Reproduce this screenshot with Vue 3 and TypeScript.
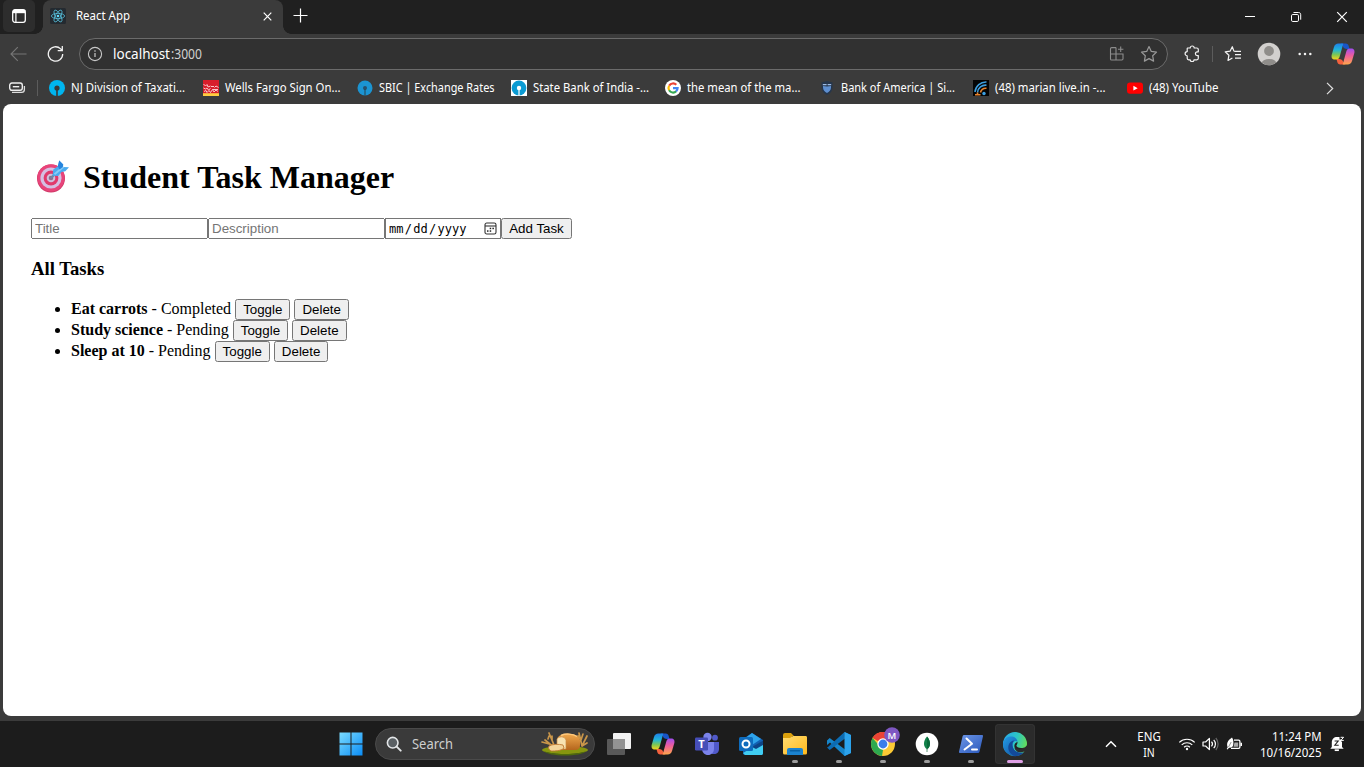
<script setup lang="ts">
import { ref } from 'vue'

interface Bookmark { icon: string; label: string; width: number }
interface Task { title: string; done: boolean }
interface DockApp { name: string; state: 'idle' | 'open' | 'active' }

const bookmarks: Bookmark[] = [
  { icon: 'nj', label: 'NJ Division of Taxati...', width: 114 },
  { icon: 'wells', label: 'Wells Fargo Sign On...', width: 115.5 },
  { icon: 'sbic', label: 'SBIC | Exchange Rates', width: 115.5 },
  { icon: 'sbi', label: 'State Bank of India -...', width: 116 },
  { icon: 'google', label: 'the mean of the ma...', width: 113.5 },
  { icon: 'boa', label: 'Bank of America | Si...', width: 114 },
  { icon: 'marian', label: '(48) marian live.in -...', width: 110.5 },
  { icon: 'youtube', label: '(48) YouTube', width: 69.5 },
]

const tasks = ref<Task[]>([
  { title: 'Eat carrots', done: true },
  { title: 'Study science', done: false },
  { title: 'Sleep at 10', done: false },
])

const apps: DockApp[] = [
  { name: 'taskview', state: 'idle' },
  { name: 'copilot', state: 'idle' },
  { name: 'teams', state: 'idle' },
  { name: 'outlook', state: 'idle' },
  { name: 'explorer', state: 'open' },
  { name: 'vscode', state: 'open' },
  { name: 'chrome', state: 'open' },
  { name: 'mongo', state: 'open' },
  { name: 'powershell', state: 'open' },
  { name: 'edge', state: 'active' },
]

function toggle(task: Task) {
  task.done = !task.done
}
function remove(index: number) {
  tasks.value.splice(index, 1)
}
</script>

<template>
  <div class="screen">
    <svg class="defs" width="0" height="0" aria-hidden="true">
      <defs>
        <linearGradient id="cpA" x1="0" y1="0" x2="0" y2="1">
          <stop offset="0" stop-color="#1f7fe8" /><stop offset=".4" stop-color="#21b5d8" /><stop offset=".7" stop-color="#7dc653" /><stop offset="1" stop-color="#f4d51c" />
        </linearGradient>
        <linearGradient id="cpB" x1="0" y1="0" x2="0" y2="1">
          <stop offset="0" stop-color="#a04df0" /><stop offset=".45" stop-color="#ee5d9c" /><stop offset="1" stop-color="#ffa64b" />
        </linearGradient>
        <linearGradient id="win" x1="0" y1="0" x2="1" y2="1">
          <stop offset="0" stop-color="#7bdcff" /><stop offset="1" stop-color="#0a8cf5" />
        </linearGradient>
        <linearGradient id="folder" x1="0" y1="0" x2="1" y2="1">
          <stop offset="0" stop-color="#ffdc72" /><stop offset="1" stop-color="#ffb91c" />
        </linearGradient>
        <linearGradient id="edgeTop" x1="0" y1="0.3" x2="1" y2="0.6">
          <stop offset="0" stop-color="#27a9e8" /><stop offset=".5" stop-color="#2cc6c5" /><stop offset="1" stop-color="#68df50" />
        </linearGradient>
        <linearGradient id="edgeLow" x1="0" y1="0" x2="1" y2="1">
          <stop offset="0" stop-color="#239be5" /><stop offset="1" stop-color="#114a9c" />
        </linearGradient>
        <linearGradient id="ps" x1="0" y1="0" x2="1" y2="1">
          <stop offset="0" stop-color="#6d97e8" /><stop offset="1" stop-color="#2a58bb" />
        </linearGradient>
        <linearGradient id="loaf" x1="0" y1="0" x2="0" y2="1">
          <stop offset="0" stop-color="#f0a94e" /><stop offset="1" stop-color="#b5661d" />
        </linearGradient>
        <symbol id="copilot" viewBox="0 0 24 24">
          <path d="M9.500 1.500h5.200c1.800 0 2.600.9 3 2.500l.8 3H16c-2.300 0-3.400-.8-4.200-3z" fill="#1955c8" />
          <path d="M14.500 22.500H9.300c-1.800 0-2.600-.9-3-2.500l-.8-3H8c2.300 0 3.400.8 4.200 3z" fill="#f4613d" />
          <path d="M7.500 1.500h4.800L8.700 14.500c-.6 2-1.500 3-3.200 3H4c-3 0-4-2-3.200-5L3 5C3.700 2.800 5 1.500 7.500 1.500z" fill="url(#cpA)" />
          <path d="M16.500 22.500h-4.800l3.600-13c.6-2 1.500-3 3.200-3H20c3 0 4 2 3.200 5L21 19c-.7 2.200-2 3.500-4.500 3.500z" fill="url(#cpB)" />
        </symbol>
      </defs>
    </svg>

    <header class="tabstrip">
      <div class="workspace">
        <svg width="14" height="14" viewBox="0 0 14 14"><rect x=".7" y=".7" width="12.600" height="12.600" rx="2.200" fill="none" stroke="#fff" stroke-width="1.300" /><path d="M1 1h12v3.200H1z" fill="#fff" /><path d="M3.900 4v9" stroke="#fff" stroke-width="1.200" /></svg>
      </div>
      <div class="tab">
        <svg class="react" width="16" height="16" viewBox="0 0 16 16"><rect width="16" height="16" rx="1.500" fill="#242a30" /><g fill="none" stroke="#55bdd8" stroke-width=".8"><ellipse cx="8" cy="8" rx="6.600" ry="2.600" /><ellipse cx="8" cy="8" rx="6.600" ry="2.600" transform="rotate(60 8 8)" /><ellipse cx="8" cy="8" rx="6.600" ry="2.600" transform="rotate(120 8 8)" /></g><circle cx="8" cy="8" r="1.300" fill="#61dafb" /></svg>
        <svg class="label tab-label" width="55" height="18"><text x="0" y="13" textLength="54" lengthAdjust="spacingAndGlyphs">React App</text></svg>
        <svg class="tab-close" width="9" height="9" viewBox="0 0 9 9"><path d="M.7.7l7.600 7.600M8.300.7L.7 8.300" stroke="#fff" stroke-width="1.200" /></svg>
      </div>
      <svg class="newtab" width="15" height="15" viewBox="0 0 15 15"><path d="M7.500.5v14M.5 7.500h14" stroke="#fff" stroke-width="1.200" /></svg>
      <div class="winctl">
        <svg width="46" height="34" viewBox="0 0 46 34"><path d="M19 16.500h10" stroke="#fff" /></svg>
        <svg width="46" height="34" viewBox="0 0 46 34"><rect x="19.500" y="14.500" width="7" height="7" rx="1.300" fill="none" stroke="#fff" /><path d="M21.500 12.500h5c1.400 0 2.200.8 2.200 2.200v5" fill="none" stroke="#fff" /></svg>
        <svg width="46" height="34" viewBox="0 0 46 34"><path d="M19.200 12.200l9.600 9.600M28.800 12.200l-9.600 9.600" stroke="#fff" stroke-width="1.200" /></svg>
      </div>
    </header>

    <nav class="toolbar">
      <svg class="back" width="17" height="16" viewBox="0 0 17 16"><path d="M16.500 8H1.200M7.800 1.200L1 8l6.800 6.800" fill="none" stroke="#777" stroke-width="1.100" /></svg>
      <svg class="reload" width="17" height="18" viewBox="0 0 17 18"><path d="M15.700 9a7.200 7.200 0 1 1-2.100-5.100L15.200 5.500M15.300 1v4.600h-4.600" fill="none" stroke="#f2f2f2" stroke-width="1.300" /></svg>
      <div class="omnibox">
        <svg class="info" width="16" height="16" viewBox="0 0 16 16"><circle cx="8" cy="8" r="6.600" fill="none" stroke="#c8c8c8" stroke-width="1.100" /><path d="M8 7v4" stroke="#ccc" stroke-width="1.200" /><circle cx="8" cy="5" r=".8" fill="#ccc" /></svg>
        <svg class="label url" width="90" height="20"><text x="0" y="15" textLength="57" lengthAdjust="spacingAndGlyphs">localhost</text><text class="port" x="58" y="15" textLength="31" lengthAdjust="spacingAndGlyphs">:3000</text></svg>
        <svg class="apps-icon" width="16" height="16" viewBox="0 0 16 16" fill="none" stroke="#8c8c8c" stroke-width="1.100"><path d="M7 1.600H2.600Q1.500 1.600 1.500 2.700v10.200Q1.500 14 2.600 14h10.200q1.200 0 1.200-1.200V8H1.500M7 1.600V14M11.700.5v5.400M9 3.200h5.400" /></svg>
        <svg class="star" width="18" height="18" viewBox="0 0 18 18"><path d="M9 1.500l2.300 4.900 5.200.7-3.800 3.700.9 5.300L9 13.600l-4.600 2.500.9-5.300-3.800-3.700 5.200-.7z" fill="none" stroke="#999" stroke-width="1.200" stroke-linejoin="round" /></svg>
      </div>
      <svg class="puzzle" width="17" height="17" viewBox="0 0 17 17"><path d="M3.500 3h2.700a2 2 0 0 1 4 0h2.600q1.500 0 1.500 1.500v2.300h-1a1.900 1.900 0 0 0 0 3.800h1v2.700q0 1.500-1.500 1.500H10a1.900 1.900 0 0 1-3.800 0H4.700q-1.500 0-1.500-1.500v-2.500a2.100 2.100 0 0 1 0-4.200V3.500z" fill="none" stroke="#f3f3f3" stroke-width="1.200" stroke-linejoin="round" /></svg>
      <span class="divider"></span>
      <svg class="favs" width="18" height="17" viewBox="0 0 18 17" fill="none" stroke="#f3f3f3" stroke-width="1.200"><path d="M10 6.400L8.300 1.700 6.200 6.100l-5 .7 3.700 3.500-.9 5.100 4.400-2.500M10.300 6.300h6.700M11 9.700h6M11 13.200h6" stroke-linejoin="round" /></svg>
      <svg class="avatar" width="24" height="24" viewBox="0 0 24 24"><circle cx="12" cy="12" r="11.300" fill="#d2d0ce" /><circle cx="12" cy="9" r="4.900" fill="#8f8d8a" /><path d="M4.700 20.500a7.700 5.200 0 0 1 14.600 0A11.300 11.300 0 0 1 4.700 20.500z" fill="#8f8d8a" /></svg>
      <svg class="more" width="14" height="4" viewBox="0 0 14 4" fill="#f3f3f3"><circle cx="1.700" cy="2" r="1.250" /><circle cx="7" cy="2" r="1.250" /><circle cx="12.300" cy="2" r="1.250" /></svg>
      <svg class="copilot" width="24" height="24"><use href="#copilot" /></svg>
    </nav>

    <div class="bookmarks">
      <svg class="stack" width="17" height="12" viewBox="0 0 17 12"><rect x=".7" y="1" width="12.600" height="7.300" rx="2.200" fill="none" stroke="#eee" stroke-width="1.400" /><path d="M3.800 4.700h6.400" stroke="#eee" stroke-width="1.400" /><path d="M3 10.400h9.500q2.900 0 2.900-2.900V4" fill="none" stroke="#ddd" stroke-width="1.300" /></svg>
      <span class="divider"></span>
      <div v-for="b in bookmarks" :key="b.label" class="bookmark">
        <svg width="16" height="16" viewBox="0 0 16 16">
          <template v-if="b.icon === 'nj'"><circle cx="8" cy="8" r="8" fill="#00b5ef" /><circle cx="8" cy="8" r="2.600" fill="#383838" /><path d="M7.200 9h1.600v7H7.200z" fill="#383838" /></template>
          <template v-else-if="b.icon === 'wells'"><path d="M0 0h16v14H0z" fill="#d71e2b" /><path d="M0 13.200h16V16H0z" fill="#ffcd41" /><path d="M.5 4l2 2 1.500-1.500L5 7l2.500-1M.5 8l2 1L4 8l1.500 2L7.500 8.500M8 6.500h3M11.500 7.500L13 6l2.500 1.500M1 11.500l2-1 1 2 2-2 1.500 2 2-3 1.500 2.500 2-2 2 1.500M9.500 9.500h5.500" fill="none" stroke="#fbc6ca" stroke-width="1" /></template>
          <template v-else-if="b.icon === 'sbic'"><circle cx="8" cy="8" r="7.500" fill="#1b94d2" /><circle cx="8" cy="8" r="2" fill="#27506b" /><path d="M7.500 9h1v6.500h-1z" fill="#27414f" /></template>
          <template v-else-if="b.icon === 'sbi'"><path d="M0 0h16v16H0z" fill="#fff" /><circle cx="8" cy="8" r="7.400" fill="#0b9bd3" /><circle cx="8" cy="8" r="2.200" fill="#fff" /><path d="M7.400 9h1.200v7H7.400z" fill="#fff" /></template>
          <template v-else-if="b.icon === 'google'"><circle cx="8" cy="8" r="8" fill="#fff" /><g fill="none" stroke-width="2.200"><path d="M4.200 5.600A4.600 4.600 0 0 1 11.300 4.800" stroke="#ea4335" /><path d="M4.100 10.300A4.700 4.700 0 0 1 4.100 5.700" stroke="#fbbc05" /><path d="M11.200 11.300a4.600 4.600 0 0 1-7.100-1" stroke="#34a853" /><path d="M8 8.100h4.600a4.600 4.600 0 0 1-1.500 3.300" stroke="#4285f4" /></g></template>
          <template v-else-if="b.icon === 'boa'"><path d="M8 1l5.500 1.500v5.300c0 3.200-2.500 5.800-5.500 7.200-3-1.400-5.500-4-5.500-7.200V2.500z" fill="#26364c" /><path d="M8 6.500l4-.5v1.500c0 2.300-1.700 4.400-4 5.600-2.300-1.200-4-3.300-4-5.600V6z" fill="#5e8fd0" /><path d="M3.800 4.600h3.800M8.600 4.600h3.600" stroke="#9dbbe4" stroke-width="1.300" /></template>
          <template v-else-if="b.icon === 'marian'"><path d="M0 0h16v16H0z" fill="#050505" /><g fill="none" stroke="#3d9fe0" stroke-width="1.500"><path d="M2 12A11 11 0 0 1 13.500 2" /><path d="M4.500 12.500a8 8 0 0 1 9-7.300" /></g><path d="M7.500 12.500c.6-2.600 3-4.400 6-4.200M2 14.800h5.500M4.500 12.500v3" fill="none" stroke="#e8822c" stroke-width="1.600" /><circle cx="11" cy="13.500" r="1.700" fill="#3d9fe0" /></template>
          <template v-else><rect x="0" y="2.500" width="16" height="11.300" rx="3" fill="#f00" /><path d="M6.400 5.700v4.900l4.300-2.450z" fill="#fff" /></template>
        </svg>
        <svg class="label" width="126" height="18"><text x="0" y="13" :textLength="b.width" lengthAdjust="spacingAndGlyphs">{{ b.label }}</text></svg>
      </div>
      <svg class="chevron" width="8" height="13" viewBox="0 0 8 13"><path d="M1 .8l5.700 5.700L1 12.200" fill="none" stroke="#e0e0e0" stroke-width="1.200" /></svg>
    </div>

    <main class="page">
      <h1>
        <svg class="dart" width="34" height="34" viewBox="0 0 34 34"><circle cx="15" cy="18.500" r="14" fill="#d03a68" /><circle cx="15" cy="17.800" r="13.600" fill="#e8447a" /><circle cx="15" cy="18" r="10.600" fill="#d5bfe2" /><circle cx="15" cy="18" r="7.400" fill="#e03a6c" /><circle cx="15" cy="18" r="4.300" fill="#cfc0dc" /><circle cx="15" cy="18" r="2.300" fill="#8e6f90" /><path d="M15 18l6-6" stroke="#6f86a5" stroke-width="2.400" /><path d="M16.500 15.800l.8-6.300 5-3.500.9-5.500 4 4-.3 2.500 6.100.3-3.700 4-3.800.7-3.200 4z" fill="#4aabf0" /><path d="M18.500 14.200l9-7.500" stroke="#86ccf8" stroke-width="2" /><path d="M23.200.5l4 4-.4 2.500-3.300 2.600-1.700-3.600z" fill="#2684dd" /></svg>
        <span>Student Task Manager</span>
      </h1>
      <form class="entry" @submit.prevent>
        <input class="field" type="text" placeholder="Title">
        <input class="field" type="text" placeholder="Description">
        <div class="date">
          <span>mm</span><span>/</span><span>dd</span><span>/</span><span>yyyy</span>
          <svg width="13" height="13" viewBox="0 0 13 13"><rect x="1" y="1" width="11" height="11" rx="1.800" fill="none" stroke="#333" stroke-width="1.100" /><path d="M1 4h11" stroke="#333" stroke-width="1.100" /><g fill="#222"><rect x="5.700" y="5.700" width="1.500" height="1.500" /><rect x="8.400" y="5.700" width="1.500" height="1.500" /><rect x="3" y="8.300" width="1.500" height="1.500" /><rect x="5.700" y="8.300" width="1.500" height="1.500" /></g></svg>
        </div>
        <button class="add" type="submit">Add Task</button>
      </form>
      <h3>All Tasks</h3>
      <ul>
        <li v-for="(task, i) in tasks" :key="task.title">
          <strong>{{ task.title }}</strong> - {{ task.done ? 'Completed' : 'Pending' }}
          <button type="button" @click="toggle(task)">Toggle</button>
          {{ ' ' }}<button type="button" @click="remove(i)">Delete</button>
        </li>
      </ul>
    </main>

    <footer class="taskbar">
      <svg class="start" width="24" height="24" viewBox="0 0 24 24"><path d="M.5.5h11v11H.5zM12.500.5h11v11h-11zM.5 12.500h11v11H.5zM12.500 12.500h11v11h-11z" fill="url(#win)" /></svg>
      <div class="search">
        <svg width="16" height="16" viewBox="0 0 16 16"><circle cx="6.700" cy="6.700" r="5.300" fill="#5a6064" stroke="#e3e6e8" stroke-width="1.600" /><path d="M10.700 10.700l4 4" stroke="#e3e6e8" stroke-width="1.900" stroke-linecap="round" /></svg>
        <svg class="label search-label" width="44" height="20"><text x="0" y="15" textLength="41" lengthAdjust="spacingAndGlyphs">Search</text></svg>
        <svg class="bread" width="48" height="26" viewBox="0 0 48 26">
          <ellipse cx="24" cy="20" rx="23" ry="4" fill="#87960f" /><path d="M3 21c8 4 34 4 42 0-4 6-38 6-42 0z" fill="#4f6b0b" />
          <g fill="none" stroke="#c9964a" stroke-width="1.700" stroke-linecap="round"><path d="M8 3l5 12M1 12l11 3M4 10l5 4M8 6l-1 3M11 6l0 4" /><path d="M38 3l3 13M46 6l-5 10M37 6l3 4M42 4l-2 6M46 13l-5 3" /></g>
          <path d="M16 9c2-7 21-7 23 1v5c0 4-2 5-6 5H18z" fill="url(#loaf)" />
          <path d="M20 5.500c4-2 12-2 16 1" fill="none" stroke="#ffc97c" stroke-width="1.500" />
          <path d="M16 9c3-4 10-2 9 3v7h-9z" fill="#f8e3b2" stroke="#c98a43" stroke-width=".7" />
          <path d="M8 16c3-2 10-2 14-1l1 3c-3 3-9 3-13 3-2-1-3-3-2-5z" fill="#f3d59b" stroke="#c17a34" stroke-width=".9" />
        </svg>
      </div>

      <div class="apps">
        <div v-for="app in apps" :key="app.name" class="app" :class="app.state">
          <svg width="32" height="32" viewBox="0 0 32 32">
            <template v-if="app.name === 'taskview'"><rect x="10" y="5" width="18" height="16" rx="1" fill="#f2f2f2" /><rect x="4" y="11" width="18" height="16" rx="1" fill="#595959" /><path d="M10 11h12v10H10z" fill="#939393" /></template>
            <template v-else-if="app.name === 'copilot'"><use href="#copilot" x="4" y="4" width="24" height="24" /></template>
            <template v-else-if="app.name === 'teams'"><circle cx="16.500" cy="9" r="4.200" fill="#7b83eb" /><circle cx="24" cy="9.700" r="2.900" fill="#5059c9" /><path d="M21 14h7v7c0 3-2 5-5 5h-2z" fill="#5059c9" /><path d="M11 14h12v6.500c0 4-2.500 6.500-6 6.500s-6-2.500-6-6.500z" fill="#7b83eb" /><rect x="4" y="9.500" width="13" height="13" rx="1.200" fill="#464eb8" /><text class="glyph" x="10.500" y="20" font-size="11">T</text></template>
            <template v-else-if="app.name === 'outlook'"><path d="M8 11L17 5l11 7v13c0 1.500-.8 2-2 2H10c-1.300 0-2-.7-2-2z" fill="#1261b4" /><path d="M17 5l9 6-9 6-8-6z" fill="#2ea3ea" /><path d="M8 25l20-12v12c0 1.500-.8 2-2 2H10z" fill="#40cdf2" /><path d="M17 19l11-6.500V17l-7 4z" fill="#0d4487" /><rect x="4" y="9" width="14" height="14" rx="1.500" fill="#0f6cbd" /><circle cx="11" cy="16" r="3.500" fill="none" stroke="#fff" stroke-width="2" /></template>
            <template v-else-if="app.name === 'explorer'"><path d="M4 7q0-2 2-2h6l3 3h-2v6H4z" fill="#dba00c" /><path d="M4 10h7l3-2h13q1 0 1 1.500V25q0 1.500-1.500 1.500h-21Q4 26.500 4 25z" fill="url(#folder)" /><path d="M8 27v-5q0-2 2-2h12q2 0 2 2v5z" fill="#1b83cf" /><path d="M11.500 22.800h9" stroke="#0961a5" stroke-width="1.500" stroke-linecap="round" /></template>
            <template v-else-if="app.name === 'vscode'"><path d="M21.500 4L28 7v18l-6.500 3L7 14.500 4 17v-4.500L6.700 10 22 21.500V10.800z" fill="#1685ca" /><path d="M21.500 4L5 19l-1 .5L6.700 22 22 10.500z" fill="#0c6cb3" /><path d="M21.500 4L28 7v18l-6.500 3z" fill="#2ca3ec" /></template>
            <template v-else-if="app.name === 'chrome'"><circle cx="16" cy="16" r="12" fill="#fcc934" /><path d="M16 16L5.600 10A12 12 0 0 1 26.400 10z" fill="#ea4335" /><path d="M5.600 10L16 22l-1 6A12 12 0 0 1 5.600 10z" fill="#2da94f" /><path d="M5.600 10A12 12 0 0 1 26.400 10H16z" fill="#ea4335" /><circle cx="16" cy="16" r="5.700" fill="#fff" /><circle cx="16" cy="16" r="4.400" fill="#3b7de9" /></template>
            <template v-else-if="app.name === 'mongo'"><circle cx="16" cy="16" r="11.300" fill="#fff" /><path d="M16 8.500c4.200 5 3.800 10 0 13-3.800-3-4.200-8 0-13z" fill="#12824a" /><path d="M16 8.500c4.200 5 3.800 10 0 13z" fill="#096b3b" /><path d="M16 20v4" stroke="#4f8d6a" stroke-width=".9" /></template>
            <template v-else-if="app.name === 'powershell'"><path d="M9.200 7H27q1.300 0 1 1.300l-3.500 15.500q-.3 1.200-1.500 1.200H5q-1.300 0-1-1.300L7.600 8.300Q7.900 7 9.200 7z" fill="url(#ps)" /><path d="M11.500 10.500l5.500 5.300-7.500 5.700M17 21.500h5" fill="none" stroke="#fff" stroke-width="2" stroke-linecap="round" stroke-linejoin="round" /></template>
            <template v-else><path d="M28 16A12 12 0 1 0 16 28c4 0 7-1.500 9.500-4.500-5 2-10 0-10-4.500 0-2 .8-2.500.8-4 0 2 1.200 5 6 5 3.200 0 5.700-1.500 5.700-4z" fill="url(#edgeTop)" /><path d="M4 16c.5-5 4-7.500 8-7.500 3.500 0 6.300 2 6.500 5.500-2-2-5-.5-5 3.500 0 4.500 4 8.500 10.500 7.500A12 12 0 0 1 4 16z" fill="url(#edgeLow)" /><path d="M16.500 27.900C11 26.500 8.500 22 9.500 17.500c.7-3 3-5 6.200-5-2 1-2.500 3-2.200 5.200.5 4.500 5 8 11.600 6.500a12 12 0 0 1-8.600 3.700z" fill="#134a99" /><path d="M18.500 14c.4 2.200-1.500 3-1.100 4.400.5 1.500 3 2.400 6.400 1.700-3 2.200-8.300.8-8.300-2.900 0-1.500 1.200-2.700 3-3.200z" fill="#222" /></template>
          </svg>
          <svg v-if="app.name === 'chrome'" class="profile" width="16" height="16" viewBox="0 0 16 16"><circle cx="8" cy="8" r="7.800" fill="#7e57c2" /><text class="glyph initial" x="8" y="11.600" font-size="9.500">M</text></svg>
          <span v-if="app.state !== 'idle'" class="pip"></span>
        </div>
      </div>

      <div class="tray">
        <svg class="up" width="12" height="8" viewBox="0 0 12 8"><path d="M1 6.700l5-5 5 5" fill="none" stroke="#fff" stroke-width="1.500" /></svg>
        <div class="lang">
          <svg class="label" width="26" height="16"><text x="13" y="13" text-anchor="middle" textLength="23.500" lengthAdjust="spacingAndGlyphs">ENG</text></svg>
          <svg class="label" width="26" height="16"><text x="13" y="13" text-anchor="middle" textLength="11.500" lengthAdjust="spacingAndGlyphs">IN</text></svg>
        </div>
        <svg class="wifi" width="18" height="14" viewBox="0 0 18 14" fill="none" stroke="#fff" stroke-width="1.200"><path d="M1.300 5.400a11 11 0 0 1 15.400 0M3.700 7.900a7.600 7.600 0 0 1 10.600 0M6.100 10.300a4.200 4.200 0 0 1 5.800 0" /><circle cx="9" cy="12" r="1.200" fill="#fff" stroke="none" /></svg>
        <svg class="vol" width="17" height="14" viewBox="0 0 17 14" fill="none" stroke="#fff" stroke-width="1.200"><path d="M1 5h2.600L7.400 1.400v11.200L3.600 9H1zM9.500 4.700a3.500 3.500 0 0 1 0 4.600M11.700 2.800a6 6 0 0 1 0 8.400" stroke-linejoin="round" /><path d="M13.800 1a9 9 0 0 1 0 12" stroke="#666" /></svg>
        <svg class="battery" width="17" height="14" viewBox="0 0 17 14"><path d="M8 3.200h4.600q1.300 0 1.300 1.300v5.600q0 1.300-1.300 1.300H5" fill="none" stroke="#fff" stroke-width="1.300" /><path d="M14.500 5.700H16v3.400h-1.500z" fill="#fff" /><path d="M8.500 5.500h3.700v4.200H7.500z" fill="#aaa" /><path d="M6 .5c1.300 2 1.700 4.500 1.300 7C7 10 5.300 11 3 10.700L1.500 12.500.7 12l1-1.800C.3 7 1.300 3.500 6 .5z" fill="#fff" /><path d="M5.200 5L2.500 10" stroke="#777" stroke-width=".8" /></svg>
        <div class="clock">
          <svg class="label" width="64" height="16"><text x="63.500" y="12.500" text-anchor="end" textLength="49.500" lengthAdjust="spacingAndGlyphs">11:24 PM</text></svg>
          <svg class="label" width="64" height="16"><text x="63.500" y="12.500" text-anchor="end" textLength="61.500" lengthAdjust="spacingAndGlyphs">10/16/2025</text></svg>
        </div>
        <svg class="bell" width="15" height="16" viewBox="0 0 15 16"><path d="M1.800 11V6.500C1.800 3 4 1 7 1h2.500v2.500H11v2h1V11l1.700 1.800H.3z" fill="#fff" /><path d="M4.700 14.200h4.200" stroke="#fff" stroke-width="1.700" /><path d="M4.600 5h3.600L4.800 9.200h3.900" fill="none" stroke="#222" stroke-width="1.100" /><path d="M10.600 1.300h3l-2.800 3.100h3" fill="none" stroke="#fff" stroke-width="1" /></svg>
      </div>
    </footer>
  </div>
</template>

<style>
html, body { margin: 0; overflow: hidden; background: #3b3b3b; }
</style>

<style scoped>
.screen { width: 1364px; height: 767px; display: flex; flex-direction: column; background: #3b3b3b; font-family: "Noto Sans", "Open Sans", sans-serif; overflow: hidden; }
svg { display: block; flex: none; }
.defs { position: absolute; }
.label { overflow: visible; font-size: 12px; fill: #fff; }
.glyph { fill: #fff; font-weight: 700; text-anchor: middle; font-family: "Open Sans", sans-serif; }
.initial { font-weight: 600; }
.divider { width: 1px; height: 16px; background: #5c5c5c; flex: none; }

.tabstrip { height: 34px; display: flex; background: #202020; flex: none; }
.workspace { width: 32px; height: 32px; margin-left: 3px; border-radius: 5px; background: #2d2d2d; display: grid; place-items: center; }
.tab { position: relative; width: 240px; height: 34px; margin-left: 8px; padding-left: 7px; box-sizing: border-box; border-radius: 8px 8px 0 0; background: #3b3b3b; display: flex; align-items: center; }
.tab::before, .tab::after { content: ""; position: absolute; bottom: 0; width: 8px; height: 8px; }
.tab::before { left: -8px; background: radial-gradient(circle at 0 0, transparent 7.500px, #3b3b3b 8px); }
.tab::after { right: -8px; background: radial-gradient(circle at 100% 0, transparent 7.500px, #3b3b3b 8px); }
.react { margin-top: -2px; }
.tab-label { margin: -3px 0 0 10px; }
.tab-close { margin: -1px 0 0 132px; }
.newtab { margin: 8px 0 0 10px; }
.winctl { display: flex; margin-left: auto; }

.toolbar { height: 40px; display: flex; align-items: center; flex: none; }
.back { margin-left: 10px; }
.reload { margin-left: 20px; }
.omnibox { width: 1089px; height: 32px; margin-left: 15px; box-sizing: border-box; border: 1px solid #6b6b6b; border-radius: 16px; background: #313131; display: flex; align-items: center; }
.info { margin-left: 7px; }
.url { margin-left: 10px; font-size: 14px; }
.port { fill: #d0d0d0; }
.apps-icon { margin-left: 906px; }
.star { margin-left: 15px; }
.puzzle { margin: -1px 0 0 16px; }
.toolbar .divider { margin-left: 11px; }
.favs { margin: -1px 0 0 11px; }
.avatar { margin-left: 15px; }
.more { margin-left: 17px; }
.copilot { margin-left: 19px; }

.bookmarks { height: 30px; display: flex; align-items: center; flex: none; padding-bottom: 2px; box-sizing: border-box; }
.stack { margin-left: 9px; }
.bookmarks .divider { margin: 0 11px 0 11px; }
.bookmark { width: 154px; display: flex; align-items: center; gap: 6px; flex: none; }
.chevron { margin-left: 45px; }

.page { width: 1358px; height: 612px; margin-left: 3px; padding: 56px 28px 0; box-sizing: border-box; border-radius: 8px; background: #fff; color: #000; flex: none; font: 16px "Liberation Serif", serif; }
h1 { margin: 0; height: 34px; display: flex; align-items: center; font-size: 32px; line-height: 34px; font-weight: 700; }
.dart { margin: 0 13px 0 5px; }
.entry { display: flex; margin-top: 24px; height: 21px; }
.field { width: 177px; height: 21px; box-sizing: border-box; font: 13.333px "Liberation Sans", sans-serif; }
.date { width: 116px; height: 21px; box-sizing: border-box; border: 1px solid #767676; display: flex; align-items: center; padding-left: 3px; font: 12px/19px "DejaVu Sans Mono", monospace; }
.date span { margin: 2px 1.300px 0 0; }
.date svg { margin-left: 16px; }
button { height: 21px; padding: 1px 6px; box-sizing: border-box; font: 13.333px "Liberation Sans", sans-serif; color: #000; }
.add { width: 71px; }
h3 { margin: 19px 0 0; height: 21px; font-size: 18.720px; line-height: 21px; }
ul { margin: 19px 0 0; padding-left: 40px; }
li { height: 21px; line-height: 21px; }

.taskbar { position: relative; height: 46px; margin-top: 5px; background: #1c1c1c; display: flex; align-items: center; flex: none; }
.start { margin-left: 338.500px; }
.search { width: 220px; height: 32px; margin-left: 12.500px; box-sizing: border-box; border: 1px solid #4a4a4a; border-radius: 16px; background: #3a3a3a; display: flex; align-items: center; }
.search > svg:first-child { margin-left: 10px; }
.search-label { margin-left: 10px; font-size: 14px; fill: #cfcfcf; }
.bread { margin: -2px 0 0 85px; }
.apps { display: flex; gap: 4px; margin-left: 4px; }
.app { position: relative; width: 40px; height: 40px; display: flex; align-items: center; justify-content: center; border-radius: 4px; }
.app.active { background: #2b2b2b; box-shadow: inset 0 0 0 1px #333; }
.pip { position: absolute; left: 17px; bottom: 1px; width: 6px; height: 3px; border-radius: 2px; background: #9b9b9b; }
.active .pip { left: 12px; width: 16px; background: #dfa0e6; }
.profile { position: absolute; left: 21px; top: 3px; }
.tray { display: flex; align-items: center; margin-left: auto; }
.lang { margin-left: 19px; }
.wifi { margin-left: 16px; }
.vol { margin-left: 6px; }
.battery { margin: -1px 0 0 7px; }
.clock { margin-left: 15px; }
.bell { margin: 0 19px 0 8px; }
</style>
